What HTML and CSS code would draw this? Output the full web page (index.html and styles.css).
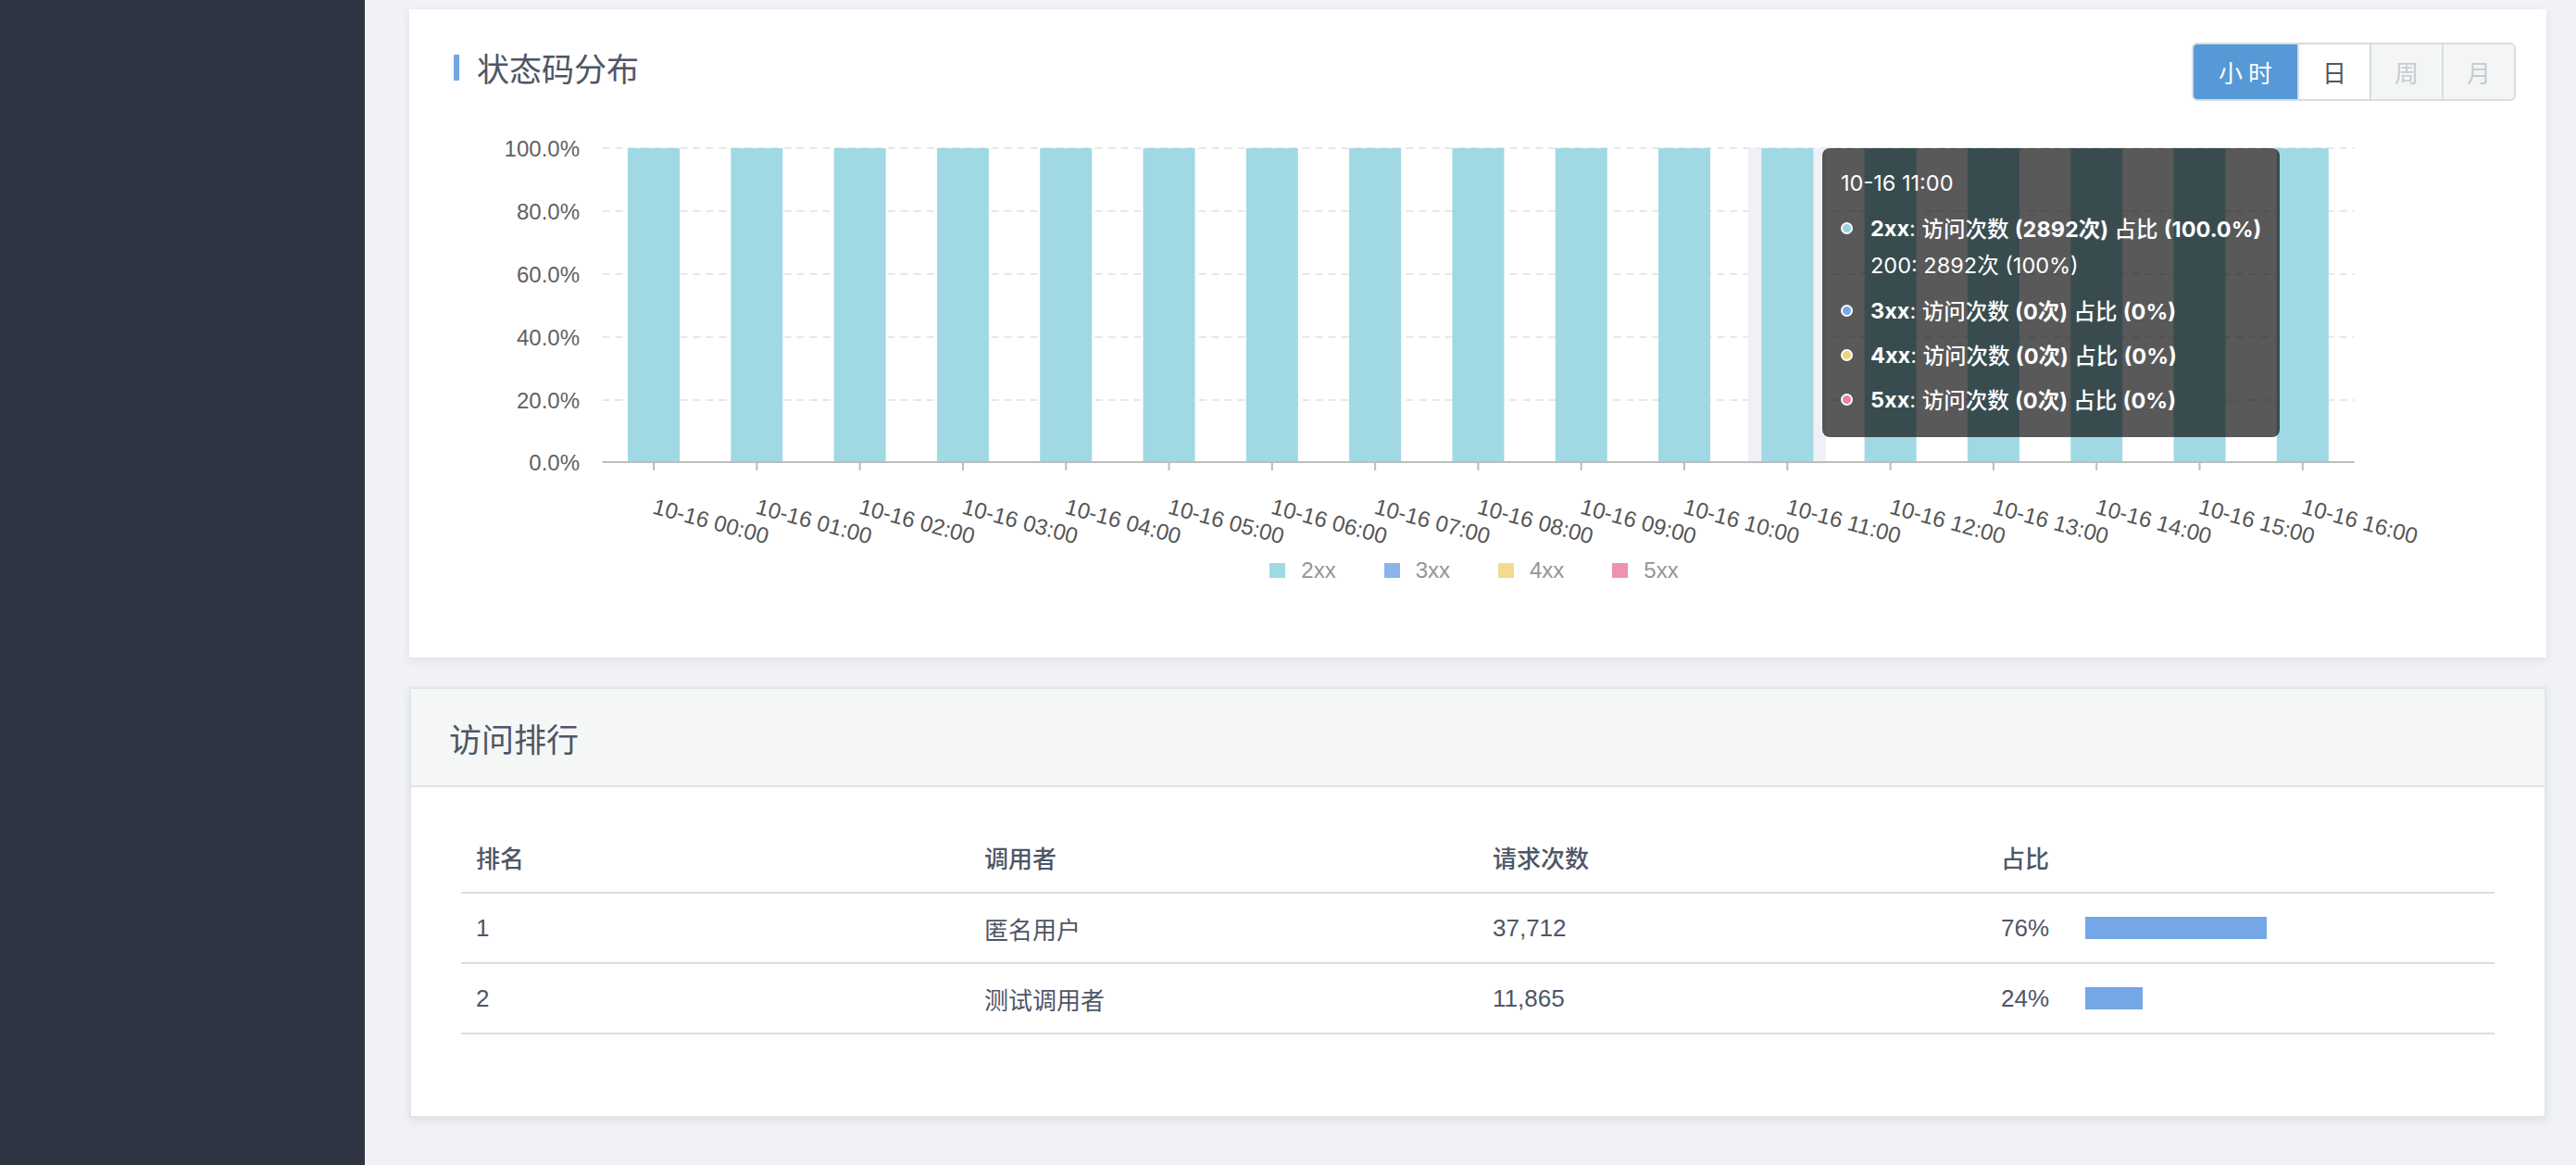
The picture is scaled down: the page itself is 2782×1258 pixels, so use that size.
FILE: index.html
```html
<!DOCTYPE html>
<html lang="zh-CN">
<head>
<meta charset="utf-8">
<title>状态码分布</title>
<link rel="stylesheet" href="styles.css">
</head>
<body>
<div class="layout">
  <aside class="sidebar"></aside>
  <main class="main">
    <section class="card card-chart">
      <div class="card-head">
        <h2 class="chart-title">状态码分布</h2>
        <div class="seg">
          <button class="seg-btn is-active seg-wide">小 时</button>
          <button class="seg-btn">日</button>
          <button class="seg-btn is-disabled">周</button>
          <button class="seg-btn is-disabled">月</button>
        </div>
      </div>
      <div class="chart-wrap">
        <svg class="chart" width="2308" height="490" viewBox="0 0 2308 490">
          <g class="grid">
            <line x1="208.5" y1="51" x2="2100.5" y2="51"/>
            <line x1="208.5" y1="119" x2="2100.5" y2="119"/>
            <line x1="208.5" y1="187" x2="2100.5" y2="187"/>
            <line x1="208.5" y1="255" x2="2100.5" y2="255"/>
            <line x1="208.5" y1="323" x2="2100.5" y2="323"/>
          </g>
          <rect class="hover-band" x="1446" y="51" width="84" height="339"/>
          <g class="bars">
            <rect x="236" y="51" width="56" height="339"/>
            <rect x="347.3" y="51" width="56" height="339"/>
            <rect x="458.6" y="51" width="56" height="339"/>
            <rect x="569.9" y="51" width="56" height="339"/>
            <rect x="681.2" y="51" width="56" height="339"/>
            <rect x="792.5" y="51" width="56" height="339"/>
            <rect x="903.8" y="51" width="56" height="339"/>
            <rect x="1015.1" y="51" width="56" height="339"/>
            <rect x="1126.4" y="51" width="56" height="339"/>
            <rect x="1237.7" y="51" width="56" height="339"/>
            <rect x="1349" y="51" width="56" height="339"/>
            <rect x="1460.3" y="51" width="56" height="339"/>
            <rect x="1571.6" y="51" width="56" height="339"/>
            <rect x="1682.9" y="51" width="56" height="339"/>
            <rect x="1794.2" y="51" width="56" height="339"/>
            <rect x="1905.5" y="51" width="56" height="339"/>
            <rect x="2016.8" y="51" width="56" height="339"/>
          </g>
          <line class="axis" x1="208.5" y1="390" x2="2100.5" y2="390"/>
          <g class="ticks">
            <line x1="264" y1="391" x2="264" y2="399"/>
            <line x1="375.3" y1="391" x2="375.3" y2="399"/>
            <line x1="486.6" y1="391" x2="486.6" y2="399"/>
            <line x1="597.9" y1="391" x2="597.9" y2="399"/>
            <line x1="709.2" y1="391" x2="709.2" y2="399"/>
            <line x1="820.5" y1="391" x2="820.5" y2="399"/>
            <line x1="931.8" y1="391" x2="931.8" y2="399"/>
            <line x1="1043.1" y1="391" x2="1043.1" y2="399"/>
            <line x1="1154.4" y1="391" x2="1154.4" y2="399"/>
            <line x1="1265.7" y1="391" x2="1265.7" y2="399"/>
            <line x1="1377" y1="391" x2="1377" y2="399"/>
            <line x1="1488.3" y1="391" x2="1488.3" y2="399"/>
            <line x1="1599.6" y1="391" x2="1599.6" y2="399"/>
            <line x1="1710.9" y1="391" x2="1710.9" y2="399"/>
            <line x1="1822.2" y1="391" x2="1822.2" y2="399"/>
            <line x1="1933.5" y1="391" x2="1933.5" y2="399"/>
            <line x1="2044.8" y1="391" x2="2044.8" y2="399"/>
          </g>
          <g class="ylabels">
            <text x="184" y="51">100.0%</text>
            <text x="184" y="119">80.0%</text>
            <text x="184" y="187">60.0%</text>
            <text x="184" y="255">40.0%</text>
            <text x="184" y="323">20.0%</text>
            <text x="184" y="390">0.0%</text>
          </g>
          <g class="xlabels">
            <text transform="translate(264 437) rotate(15)">10-16 00:00</text>
            <text transform="translate(375.3 437) rotate(15)">10-16 01:00</text>
            <text transform="translate(486.6 437) rotate(15)">10-16 02:00</text>
            <text transform="translate(597.9 437) rotate(15)">10-16 03:00</text>
            <text transform="translate(709.2 437) rotate(15)">10-16 04:00</text>
            <text transform="translate(820.5 437) rotate(15)">10-16 05:00</text>
            <text transform="translate(931.8 437) rotate(15)">10-16 06:00</text>
            <text transform="translate(1043.1 437) rotate(15)">10-16 07:00</text>
            <text transform="translate(1154.4 437) rotate(15)">10-16 08:00</text>
            <text transform="translate(1265.7 437) rotate(15)">10-16 09:00</text>
            <text transform="translate(1377 437) rotate(15)">10-16 10:00</text>
            <text transform="translate(1488.3 437) rotate(15)">10-16 11:00</text>
            <text transform="translate(1599.6 437) rotate(15)">10-16 12:00</text>
            <text transform="translate(1710.9 437) rotate(15)">10-16 13:00</text>
            <text transform="translate(1822.2 437) rotate(15)">10-16 14:00</text>
            <text transform="translate(1933.5 437) rotate(15)">10-16 15:00</text>
            <text transform="translate(2044.8 437) rotate(15)">10-16 16:00</text>
          </g>
        </svg>
        <div class="tooltip">
          <div class="tt-title">10-16 11:00</div>
          <div class="tt-row"><span class="dot dot-2xx"></span><b>2xx</b>:&nbsp;<span class="tt-val">访问次数 <b>(2892次)</b> 占比 <b>(100.0%)</b></span></div>
          <div class="tt-sub">200: 2892次 (100%)</div>
          <div class="tt-row"><span class="dot dot-3xx"></span><b>3xx</b>:&nbsp;<span class="tt-val">访问次数 <b>(0次)</b> 占比 <b>(0%)</b></span></div>
          <div class="tt-row"><span class="dot dot-4xx"></span><b>4xx</b>:&nbsp;<span class="tt-val">访问次数 <b>(0次)</b> 占比 <b>(0%)</b></span></div>
          <div class="tt-row"><span class="dot dot-5xx"></span><b>5xx</b>:&nbsp;<span class="tt-val">访问次数 <b>(0次)</b> 占比 <b>(0%)</b></span></div>
        </div>
      </div>
      <div class="legend">
        <span class="legend-item"><i class="swatch sw-2xx"></i>2xx</span>
        <span class="legend-item"><i class="swatch sw-3xx"></i>3xx</span>
        <span class="legend-item"><i class="swatch sw-4xx"></i>4xx</span>
        <span class="legend-item"><i class="swatch sw-5xx"></i>5xx</span>
      </div>
    </section>

    <section class="card card-rank">
      <div class="rank-head">访问排行</div>
      <div class="rank-body">
        <table class="rank-table">
          <thead>
            <tr><th>排名</th><th>调用者</th><th>请求次数</th><th>占比</th></tr>
          </thead>
          <tbody>
            <tr>
              <td>1</td><td>匿名用户</td><td>37,712</td>
              <td><div class="pct-cell"><span class="pct">76%</span><span class="pct-bar" style="width:196px"></span></div></td>
            </tr>
            <tr>
              <td>2</td><td>测试调用者</td><td>11,865</td>
              <td><div class="pct-cell"><span class="pct">24%</span><span class="pct-bar" style="width:62px"></span></div></td>
            </tr>
          </tbody>
        </table>
      </div>
    </section>
  </main>
</div>
</body>
</html>
```

FILE: styles.css
```css
* { box-sizing: border-box; }

html, body {
  margin: 0;
  padding: 0;
}

body {
  background: #f0f2f5;
  font-family: "Liberation Sans", "Noto Sans CJK SC", sans-serif;
  color: #4e5666;
}

.layout {
  display: flex;
  min-height: 1258px;
}

.sidebar {
  width: 394px;
  flex: 0 0 394px;
  background: #2e3441;
}

.main {
  flex: 1;
  padding: 10px 32px 0 48px;
  min-width: 0;
}

.card {
  background: #fff;
  box-shadow: 0 3px 10px rgba(0, 0, 0, 0.08);
  margin-bottom: 32px;
}

/* ---------- chart card ---------- */
.card-chart {
  height: 700px;
}

.card-head {
  display: flex;
  align-items: center;
  justify-content: space-between;
  padding: 36px 33px 0 48px;
  height: 99px;
}

.chart-title {
  margin: 0 0 10px 0;
  display: flex;
  align-items: center;
  font-family: "Noto Sans CJK SC", sans-serif;
  font-weight: normal;
  font-size: 35px;
  line-height: 40px;
  color: #4e5666;
}

.chart-title::before {
  content: "";
  display: block;
  width: 6px;
  height: 28px;
  background: #72a6e4;
  margin-right: 19px;
}

.seg {
  display: flex;
  height: 63px;
  border: 2px solid #d5dce5;
  border-radius: 6px;
  overflow: hidden;
}

.seg-btn {
  width: 78px;
  height: 100%;
  border: 0;
  border-left: 2px solid #d5dce5;
  background: #fff;
  color: #4e5666;
  font-family: "Noto Sans CJK SC", sans-serif;
  font-size: 26px;
  padding: 0;
  margin: 0;
}

.seg-btn:first-child { border-left: 0; }
.seg-wide { width: 112px; }

.seg-btn.is-active {
  background: #5798d6;
  color: #fff;
}

.seg-btn.is-disabled {
  background: #f4f6f6;
  color: #c6cbd1;
}

.chart-wrap {
  position: relative;
  height: 490px;
}

.chart {
  display: block;
}

.grid line {
  stroke: #e8e8e8;
  stroke-width: 2;
  stroke-dasharray: 8 6;
}

.hover-band { fill: #f0f0f6; }

.bars rect { fill: #a0d9e3; }

.axis {
  stroke: #bdbdbd;
  stroke-width: 2;
}

.ticks line {
  stroke: #bdbdbd;
  stroke-width: 2;
}

.ylabels text {
  font-family: "Liberation Sans", sans-serif;
  font-size: 24px;
  fill: #616161;
  text-anchor: end;
  dominant-baseline: central;
}

.xlabels text {
  font-family: "Liberation Sans", sans-serif;
  font-size: 24px;
  fill: #555;
  text-anchor: start;
  dominant-baseline: central;
}

.tooltip {
  position: absolute;
  left: 1526px;
  top: 51px;
  width: 494px;
  height: 312px;
  padding: 14px 0 0 20px;
  background: rgba(0, 0, 0, 0.65);
  border-radius: 8px;
  color: #fff;
  font-family: "Inter", "Noto Sans CJK SC", sans-serif;
  font-size: 23.5px;
  white-space: nowrap;
}

.tt-title {
  line-height: 48px;
  height: 48px;
}

.tt-row {
  display: flex;
  align-items: center;
  height: 48px;
}

.tt-row b { font-weight: 700; }

.tt-val {
  font-weight: 500;
  white-space: pre;
}

.tt-sub {
  line-height: 34px;
  height: 41px;
  padding-left: 32px;
}

.dot {
  display: inline-block;
  width: 13px;
  height: 13px;
  border-radius: 50%;
  border: 2px solid #fff;
  margin-right: 19px;
  flex: 0 0 13px;
}

.dot-2xx { background: #94d5e0; }
.dot-3xx { background: #74a7e6; }
.dot-4xx { background: #edd47e; }
.dot-5xx { background: #ea83a3; }

.legend {
  display: flex;
  justify-content: center;
  gap: 52px;
  margin-top: 5px;
  padding-right: 8px;
  height: 24px;
}

.legend-item {
  display: flex;
  align-items: center;
  font-family: "Liberation Sans", sans-serif;
  font-size: 24px;
  line-height: 24px;
  color: #959595;
}

.swatch {
  display: block;
  width: 17px;
  height: 16px;
  margin-right: 17px;
}

.sw-2xx { background: #9fd9e3; }
.sw-3xx { background: #89b3ea; }
.sw-4xx { background: #f2da8e; }
.sw-5xx { background: #ed92b1; }

/* ---------- ranking card ---------- */
.card-rank {
  border: 2px solid #e2e6e9;
}

.rank-head {
  height: 106px;
  background: #f5f7f7;
  border-bottom: 2px solid #dfe3e6;
  display: flex;
  align-items: center;
  padding-left: 41px;
  font-family: "Noto Sans CJK SC", sans-serif;
  font-size: 35px;
  color: #4e5666;
}

.rank-body {
  padding: 38px 54px 88px;
}

.rank-table {
  width: 100%;
  border-collapse: collapse;
  table-layout: fixed;
  font-family: "Liberation Sans", "Noto Sans CJK SC", sans-serif;
  font-size: 26px;
  color: #4e5666;
}

.rank-table th,
.rank-table td {
  height: 76px;
  padding: 0 0 0 16px;
  text-align: left;
  vertical-align: middle;
  border-bottom: 2px solid #d9dee5;
}

.rank-table th {
  font-weight: 500;
}

.pct-cell {
  display: flex;
  align-items: center;
}

.pct {
  width: 91px;
  flex: 0 0 91px;
}

.pct-bar {
  display: block;
  height: 24px;
  background: #75a7e6;
}
```
